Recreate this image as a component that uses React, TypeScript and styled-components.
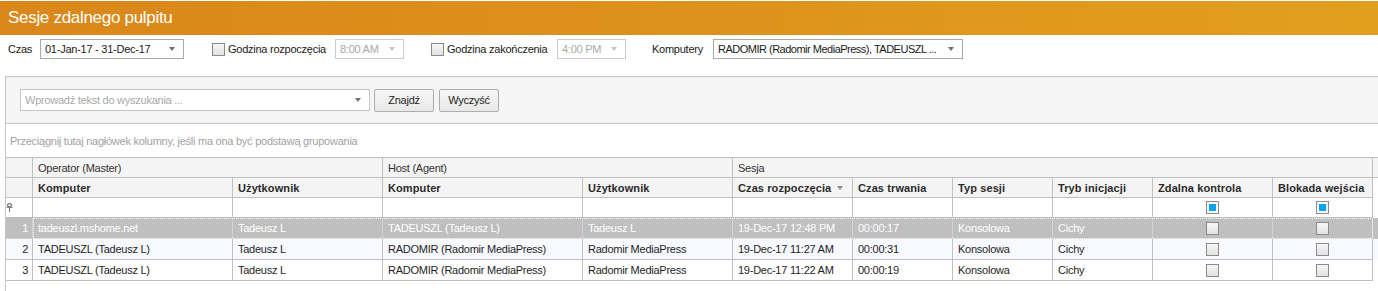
import React from "react";
import styled, { createGlobalStyle, css } from "styled-components";

const GlobalStyle = createGlobalStyle`
  html, body {
    margin: 0;
    padding: 0;
    background: #ffffff;
    overflow: hidden;
  }
  body {
    font-family: "Liberation Sans", Arial, sans-serif;
    font-size: 11px;
    letter-spacing: -0.25px;
    color: #1e1e1e;
  }
`;

const Page = styled.div`
  width: 1378px;
  height: 291px;
  overflow: hidden;
`;

const TitleBar = styled.div`
  margin-top: 1px;
  height: 34px;
  display: flex;
  align-items: center;
  padding-left: 8px;
  background: linear-gradient(90deg, #d98719 0%, #dd921b 50%, #e29f1e 100%);
  color: #ffffff;
  font-size: 17px;
  letter-spacing: -0.3px;
`;

const FilterBar = styled.div`
  margin-top: 4px;
  height: 20px;
  display: flex;
  align-items: center;
  padding-left: 8px;
`;

const FilterLabel = styled.span<{ $width: number; $gap?: number }>`
  width: ${({ $width }) => $width}px;
  margin-left: ${({ $gap = 0 }) => $gap}px;
  flex-shrink: 0;
  color: #1a1a1a;
  white-space: nowrap;
`;

const Arrow = styled.span<{ $disabled?: boolean }>`
  margin-left: 4px;
  width: 0;
  height: 0;
  border-left: 3.5px solid transparent;
  border-right: 3.5px solid transparent;
  border-top: 4px solid ${({ $disabled }) => ($disabled ? "#c4c4c4" : "#707070")};
  flex-shrink: 0;
`;

const Select = styled.div<{ $width: number; $disabled?: boolean }>`
  box-sizing: border-box;
  width: ${({ $width }) => $width}px;
  height: 20px;
  flex-shrink: 0;
  display: flex;
  align-items: center;
  padding: 0 8px 0 4px;
  background: #ffffff;
  border: 1px solid ${({ $disabled }) => ($disabled ? "#cccccc" : "#a9a9a9")};
  color: ${({ $disabled }) => ($disabled ? "#a8a8a8" : "#1a1a1a")};
  white-space: nowrap;
  overflow: hidden;
`;

const SelectText = styled.span<{ $tight?: boolean }>`
  flex: 1 1 auto;
  min-width: 0;
  overflow: hidden;
  white-space: nowrap;
  letter-spacing: ${({ $tight }) => ($tight ? "-0.5px" : "inherit")};
`;

const CheckBox = styled.span<{ $gap?: number; $state?: "off" | "mixed" }>`
  box-sizing: border-box;
  display: inline-flex;
  align-items: center;
  justify-content: center;
  width: 13px;
  height: 13px;
  flex-shrink: 0;
  margin-left: ${({ $gap = 0 }) => $gap}px;
  border: 1px solid #8a8a8a;
  background: ${({ $state }) =>
    $state === "mixed" ? "#ffffff" : "linear-gradient(180deg, #f6f6f6 0%, #e2e2e2 100%)"};
  ${({ $state }) =>
    $state === "mixed" &&
    css`
      &::after {
        content: "";
        width: 7px;
        height: 7px;
        background: #08a4f4;
      }
    `}
`;

const Panel = styled.div`
  margin: 17px 0 0 5px;
  width: 1390px;
  height: 260px;
  border: 1px solid #c6c6c6;
`;

const SearchArea = styled.div`
  height: 46px;
  display: flex;
  align-items: center;
  padding-left: 14px;
  background: #f5f5f5;
  border-bottom: 1px solid #c6c6c6;
`;

const SearchInput = styled.div`
  box-sizing: border-box;
  width: 350px;
  height: 22px;
  display: flex;
  align-items: center;
  padding: 0 8px 0 4px;
  background: #ffffff;
  border: 1px solid #c8c8c8;
  color: #a8a8a8;
`;

const Button = styled.button<{ $gap: number }>`
  box-sizing: border-box;
  width: 60px;
  height: 23px;
  margin-left: ${({ $gap }) => $gap}px;
  border: 1px solid #adadad;
  border-radius: 2px;
  background: linear-gradient(180deg, #f7f7f7 0%, #e8e8e8 100%);
  font-family: inherit;
  font-size: 11px;
  letter-spacing: -0.25px;
  color: #1e1e1e;
  padding: 0;
`;

const GroupPanel = styled.div`
  height: 33px;
  display: flex;
  align-items: center;
  padding-left: 4px;
  color: #a2a2a2;
  border-bottom: 1px solid #c0c0c0;
`;

const GridRow = styled.div<{ $height: number; $bg?: string; $color?: string; $bold?: boolean }>`
  display: flex;
  height: ${({ $height }) => $height}px;
  background: ${({ $bg = "transparent" }) => $bg};
  color: ${({ $color = "#1e1e1e" }) => $color};
  font-weight: ${({ $bold }) => ($bold ? "bold" : "normal")};
  letter-spacing: ${({ $bold }) => ($bold ? "0.1px" : "-0.25px")};
`;

const Cell = styled.div<{ $width?: number; $center?: boolean; $line?: string; $bg?: string }>`
  box-sizing: border-box;
  width: ${({ $width }) => ($width ? `${$width}px` : "auto")};
  flex: ${({ $width }) => ($width ? "0 0 auto" : "1 1 auto")};
  height: 100%;
  display: flex;
  align-items: center;
  justify-content: ${({ $center }) => ($center ? "center" : "flex-start")};
  padding-left: ${({ $center }) => ($center ? 0 : 5)}px;
  border-right: 1px solid ${({ $line = "#c0c0c0" }) => $line};
  border-bottom: 1px solid ${({ $line = "#c0c0c0" }) => $line};
  background: ${({ $bg = "transparent" }) => $bg};
  white-space: nowrap;
  overflow: hidden;
`;

const Indicator = styled(Cell)`
  justify-content: flex-end;
  padding: 0 4px 0 0;
`;

const FilterIndicator = styled(Cell)`
  justify-content: flex-start;
  padding-left: 0;
`;

const Filler = styled.div<{ $bg?: string; $border?: boolean }>`
  flex: 1 1 auto;
  height: 100%;
  box-sizing: border-box;
  background: ${({ $bg = "transparent" }) => $bg};
  border-bottom: ${({ $border }) => ($border ? "1px solid #c0c0c0" : "none")};
`;

const CellGroup = styled.div<{ $focused?: boolean }>`
  display: flex;
  height: 100%;
  ${({ $focused }) =>
    $focused &&
    css`
      outline: 1px dotted #f4f4f4;
      outline-offset: -1px;
    `}
`;

const SortArrow = styled.span`
  margin-left: 6px;
  width: 0;
  height: 0;
  border-left: 3.5px solid transparent;
  border-right: 3.5px solid transparent;
  border-top: 4px solid #8a8a8a;
`;

const PinIcon = () => (
  <svg width="7" height="9" viewBox="0 0 7 9">
    <ellipse cx="3.5" cy="2.2" rx="2.2" ry="1.8" fill="#d8d8d8" stroke="#6e6e6e" strokeWidth="1" />
    <rect x="0.5" y="3.8" width="6" height="1" fill="#6e6e6e" />
    <rect x="3" y="4.8" width="1" height="4" fill="#6e6e6e" />
  </svg>
);

type Column = { title: string; width: number; check?: boolean; sort?: boolean };

const columns: Column[] = [
  { title: "Komputer", width: 200 },
  { title: "Użytkownik", width: 150 },
  { title: "Komputer", width: 200 },
  { title: "Użytkownik", width: 150 },
  { title: "Czas rozpoczęcia", width: 120, sort: true },
  { title: "Czas trwania", width: 100 },
  { title: "Typ sesji", width: 100 },
  { title: "Tryb inicjacji", width: 100 },
  { title: "Zdalna kontrola", width: 120, check: true },
  { title: "Blokada wejścia", width: 100, check: true },
];

const bands = [
  { title: "Operator (Master)", width: 350 },
  { title: "Host (Agent)", width: 350 },
  { title: "Sesja", width: 640 },
];

const rows: string[][] = [
  [
    "tadeuszl.mshome.net",
    "Tadeusz L",
    "TADEUSZL (Tadeusz L)",
    "Tadeusz L",
    "19-Dec-17 12:48 PM",
    "00:00:17",
    "Konsolowa",
    "Cichy",
  ],
  [
    "TADEUSZL (Tadeusz L)",
    "Tadeusz L",
    "RADOMIR (Radomir MediaPress)",
    "Radomir MediaPress",
    "19-Dec-17 11:27 AM",
    "00:00:31",
    "Konsolowa",
    "Cichy",
  ],
  [
    "TADEUSZL (Tadeusz L)",
    "Tadeusz L",
    "RADOMIR (Radomir MediaPress)",
    "Radomir MediaPress",
    "19-Dec-17 11:22 AM",
    "00:00:19",
    "Konsolowa",
    "Cichy",
  ],
];

const INDICATOR = 27;
const HEAD_BG = "#f4f4f4";

export default function App() {
  return (
    <Page>
      <GlobalStyle />
      <TitleBar>Sesje zdalnego pulpitu</TitleBar>

      <FilterBar>
        <FilterLabel $width={32}>Czas</FilterLabel>
        <Select $width={144}>
          <SelectText>01-Jan-17 - 31-Dec-17</SelectText>
          <Arrow />
        </Select>
        <CheckBox $gap={28} />
        <FilterLabel $width={107} $gap={3}>
          Godzina rozpoczęcia
        </FilterLabel>
        <Select $width={69} $disabled>
          <SelectText>8:00 AM</SelectText>
          <Arrow $disabled />
        </Select>
        <CheckBox $gap={27} />
        <FilterLabel $width={110} $gap={3}>
          Godzina zakończenia
        </FilterLabel>
        <Select $width={69} $disabled>
          <SelectText>4:00 PM</SelectText>
          <Arrow $disabled />
        </Select>
        <FilterLabel $width={61} $gap={26}>
          Komputery
        </FilterLabel>
        <Select $width={250}>
          <SelectText $tight>RADOMIR (Radomir MediaPress), TADEUSZL ...</SelectText>
          <Arrow />
        </Select>
      </FilterBar>

      <Panel>
        <SearchArea>
          <SearchInput>
            <SelectText>Wprowadź tekst do wyszukania ...</SelectText>
            <Arrow />
          </SearchInput>
          <Button $gap={4}>Znajdź</Button>
          <Button $gap={5}>Wyczyść</Button>
        </SearchArea>

        <GroupPanel>
          Przeciągnij tutaj nagłówek kolumny, jeśli ma ona być podstawą grupowania
        </GroupPanel>

        <GridRow $height={20} $bg={HEAD_BG} $color="#333333">
          <Indicator $width={INDICATOR} />
          {bands.map((b) => (
            <Cell key={b.title} $width={b.width}>
              {b.title}
            </Cell>
          ))}
          <Filler $border />
        </GridRow>

        <GridRow $height={20} $color="#2a2a2a" $bold>
          <Indicator $width={INDICATOR} $bg={HEAD_BG} />
          {columns.map((c, i) => (
            <Cell key={i} $width={c.width} $bg={HEAD_BG}>
              {c.title}
              {c.sort && <SortArrow />}
            </Cell>
          ))}
        </GridRow>

        <GridRow $height={20} $bg="#ffffff">
          <FilterIndicator $width={INDICATOR}>
            <PinIcon />
          </FilterIndicator>
          {columns.map((c, i) => (
            <Cell key={i} $width={c.width} $center={c.check}>
              {c.check && <CheckBox $state="mixed" />}
            </Cell>
          ))}
        </GridRow>

        {rows.map((r, ri) => {
          const selected = ri === 0;
          const bg = selected ? "#bfbfbf" : ri % 2 === 1 ? "#f7f9fe" : "#ffffff";
          const line = selected ? "#d2d2d2" : "#c0c0c0";
          return (
            <GridRow
              key={ri}
              $height={21}
              $bg={bg}
              $color={selected ? "#ffffff" : "#1e1e1e"}
            >
              <Indicator $width={INDICATOR} $line={line}>
                {ri + 1}
              </Indicator>
              <CellGroup $focused={selected}>
                {columns.map((c, ci) => (
                  <Cell key={ci} $width={c.width} $center={c.check} $line={line}>
                    {c.check ? <CheckBox /> : r[ci]}
                  </Cell>
                ))}
              </CellGroup>
            </GridRow>
          );
        })}
      </Panel>
    </Page>
  );
}
